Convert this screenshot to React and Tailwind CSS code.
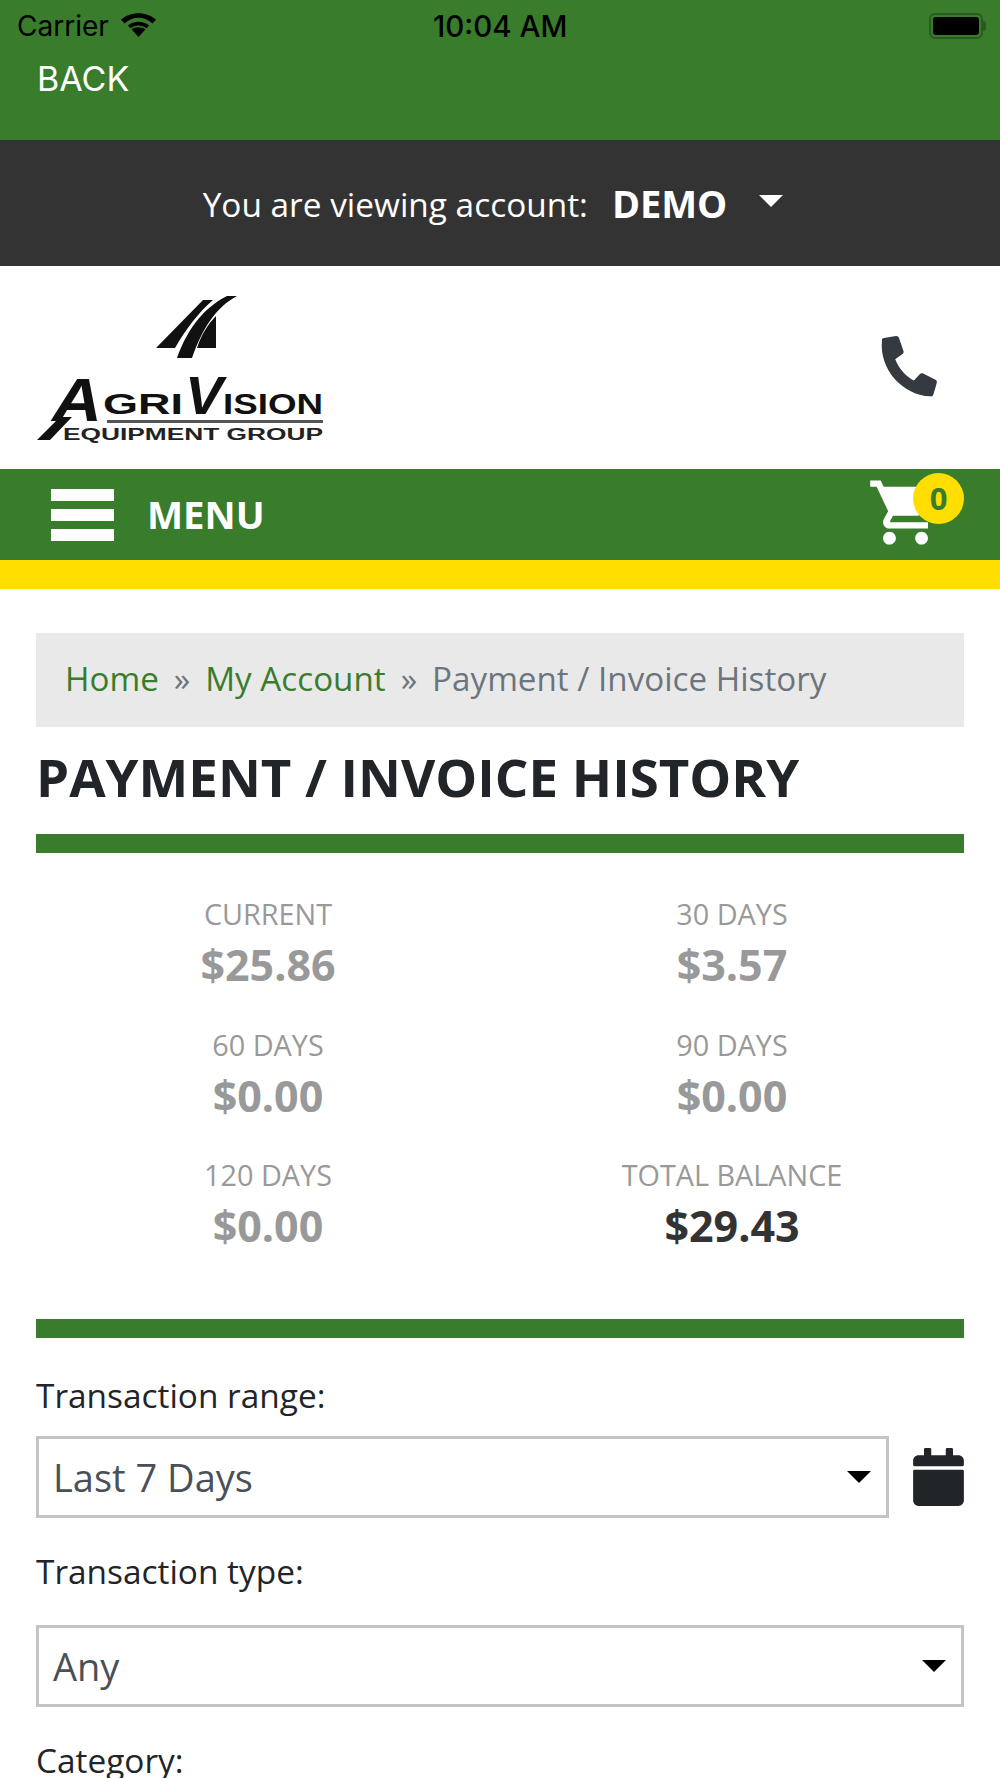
import { FaPhone, FaCalendar } from "react-icons/fa";
import { MdShoppingCart } from "react-icons/md";

const stats = [
  ["CURRENT", "$25.86"],
  ["30 DAYS", "$3.57"],
  ["60 DAYS", "$0.00"],
  ["90 DAYS", "$0.00"],
  ["120 DAYS", "$0.00"],
  ["TOTAL BALANCE", "$29.43"],
];

function Logo() {
  const font = "'Liberation Sans', sans-serif";
  return (
    <svg width="290" height="150" viewBox="0 0 290 150" className="block">
      {/* road */}
      <path d="M120 55 L167 7 L177 7 C162 20 150 36 139 55 Z" fill="#111" />
      <path d="M141 65 C150 40 165 16 191 3 L201 3 C180 14 166 36 156 65 Z" fill="#111" />
      <path d="M180 23 L180 55 L161 55 C165 42 172 31 180 23 Z" fill="#111" />
      {/* swoosh under the A */}
      <path d="M1 147 L24 124 L36 124 L14 147 Z" fill="#111" />
      {/* wordmark */}
      <text x="16" y="128" textLength="50" lengthAdjust="spacingAndGlyphs" fontFamily={font} fontStyle="italic" fontWeight="700" fontSize="62" fill="#111">A</text>
      <text x="67" y="121" textLength="80" lengthAdjust="spacingAndGlyphs" fontFamily={font} fontWeight="700" fontSize="29" fill="#111">GRI</text>
      <text x="149" y="121" textLength="38" lengthAdjust="spacingAndGlyphs" fontFamily={font} fontStyle="italic" fontWeight="700" fontSize="53" fill="#111">V</text>
      <text x="187" y="121" textLength="100" lengthAdjust="spacingAndGlyphs" fontFamily={font} fontWeight="700" fontSize="29" fill="#111">ISION</text>
      <rect x="71" y="127" width="216" height="3" fill="#555" />
      <text x="27" y="147" textLength="260" lengthAdjust="spacingAndGlyphs" fontFamily={font} fontWeight="700" fontSize="16" fill="#222">EQUIPMENT GROUP</text>
    </svg>
  );
}

function Select({ value }) {
  return (
    <div className="flex h-[82px] flex-1 items-center justify-between border-[3px] border-[#c4c4c4] bg-white pl-[14px] pr-[15px]">
      <span className="text-[38px] text-[#495057]">{value}</span>
      <span className="h-0 w-0 border-x-[12px] border-t-[12px] border-x-transparent border-t-black" />
    </div>
  );
}

export default function App() {
  return (
    <div className="h-[1778px] overflow-hidden bg-white font-['Open_Sans',sans-serif] text-[#212529]">
      {/* status bar + back */}
      <div className="h-[140px] bg-[#387c2c]">
        <div className="relative flex h-[50px] items-center justify-between pl-[17px] pr-[14px] pt-[2px] font-['Inter',sans-serif] text-[28px] text-black">
          <div className="flex items-center gap-[12px]">
            <span>Carrier</span>
            <svg width="35" height="27" viewBox="3 0 30 28" preserveAspectRatio="none" className="mb-[3px]">
              <path d="M18 27 L12 19 C15 16 21 16 24 19 Z" fill="#000" />
              <path d="M9 15 C14 10 22 10 27 15 L25 18 C21 14 15 14 11 18 Z" fill="#000" />
              <path d="M3 9 C11 0 25 0 33 9 L30 13 C23 5 13 5 6 13 Z" fill="#000" />
            </svg>
          </div>
          <span className="absolute left-[433px] text-[29.5px] font-medium">10:04 AM</span>
          <div className="flex items-center">
            <div className="flex h-[26px] w-[54px] items-center rounded-[6px] border-2 border-[#2a5a21] p-[2px]">
              <div className="h-full w-full rounded-[3px] bg-black" />
            </div>
            <div className="h-[10px] w-[3px] rounded-r bg-[#2a5a21]" />
          </div>
        </div>
        <div className="pl-[37px] pt-[7px] font-['Inter',sans-serif] text-[34px] leading-[44px] text-white">BACK</div>
      </div>

      {/* account bar */}
      <div className="flex h-[126px] items-center justify-center bg-[#333333] pr-[14px] text-white">
        <span className="mt-[3px] text-[33.4px]">You are viewing account:</span>
        <span className="ml-[24px] text-[38px] font-bold">DEMO</span>
        <span className="mb-[4px] ml-[32px] h-0 w-0 border-x-[12px] border-t-[12px] border-x-transparent border-t-white" />
      </div>

      {/* logo row */}
      <div className="flex h-[203px] items-center justify-between pl-[36px] pr-[62px]">
        <Logo />
        <FaPhone className="mb-[3px] text-[#343a40]" size={58} style={{ transform: "scaleX(-1) rotate(-4deg)" }} />
      </div>

      {/* menu bar */}
      <div className="flex h-[91px] items-center justify-between bg-[#387c2c] pl-[51px] pr-[36px]">
        <div className="flex items-center gap-[33px]">
          <div className="flex w-[63px] flex-col gap-[8px]">
            <div className="h-[12px] bg-white" />
            <div className="h-[12px] bg-white" />
            <div className="h-[12px] bg-white" />
          </div>
          <span className="text-[38.3px] font-bold text-white">MENU</span>
        </div>
        <div className="relative h-[91px] w-[94px]">
          <MdShoppingCart className="absolute left-[-3px] top-[5px] text-white" size={77} />
          <span className="absolute right-0 top-[4px] flex h-[51px] w-[51px] items-center justify-center rounded-full bg-[#ffde00] text-[31px] font-bold text-[#387c2c]">0</span>
        </div>
      </div>
      <div className="h-[29px] bg-[#ffde00]" />

      <div className="px-[36px] pt-[44px]">
        {/* breadcrumb */}
        <div className="flex h-[94px] items-center bg-[#e9e9e9] px-[29px] pb-[3px] text-[33.2px]">
          <span className="text-[#387c2c]">Home</span>
          <span className="mx-[15px] text-[#6c757d]">»</span>
          <span className="text-[#387c2c]">My Account</span>
          <span className="mx-[15px] text-[#6c757d]">»</span>
          <span className="text-[#6c757d]">Payment / Invoice History</span>
        </div>

        <h1 className="mt-[20px] text-[52.8px] leading-[60px] font-bold text-[#212529]">PAYMENT / INVOICE HISTORY</h1>
        <div className="mt-[27px] h-[19px] bg-[#387c2c]" />

        {/* balances */}
        <div className="grid h-[466px] grid-cols-2 content-start pt-[43px] text-center">
          {stats.map(([label, amount], i) => (
            <div key={label} className="h-[130.5px]">
              <div className="text-[28.8px] leading-[36px] text-[#999999]">{label}</div>
              <div className={`mt-[3px] text-[43px] leading-[60px] font-bold ${i === 5 ? "text-[#333333]" : "text-[#999999]"}`}>{amount}</div>
            </div>
          ))}
        </div>
        <div className="h-[19px] bg-[#387c2c]" />

        {/* filters */}
        <div className="mt-[35px] text-[33.4px] leading-[44px]">Transaction range:</div>
        <div className="mt-[19px] flex items-center gap-[24px]">
          <Select value="Last 7 Days" />
          <FaCalendar className="h-[58px] w-[51px] text-[#212529]" />
        </div>
        <div className="mt-[31px] text-[33.4px] leading-[44px]">Transaction type:</div>
        <div className="mt-[32px] flex">
          <Select value="Any" />
        </div>
        <div className="mt-[31px] text-[33.4px] leading-[44px]">Category:</div>
      </div>
    </div>
  );
}
